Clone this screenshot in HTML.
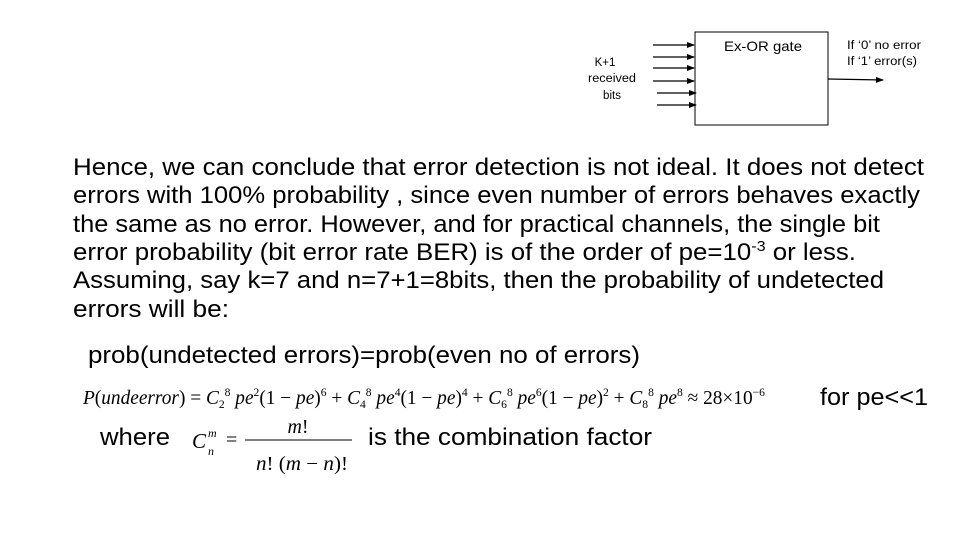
<!DOCTYPE html>
<html><head><meta charset="utf-8"><style>html,body{margin:0;padding:0;background:#fff}svg{display:block}</style></head>
<body>
<svg width="960" height="540" viewBox="0 0 960 540" xmlns="http://www.w3.org/2000/svg">
<defs><marker id="a" markerWidth="8" markerHeight="6" refX="7" refY="3" orient="auto" markerUnits="userSpaceOnUse"><path d="M0,0 L8,3 L0,6 z" fill="#000"/></marker></defs>
<rect x="695" y="32" width="133" height="93" fill="#fff" stroke="#000" stroke-width="1"/>
<g stroke="#000" stroke-width="1.3" marker-end="url(#a)">
<line x1="653" y1="45" x2="694" y2="45"/>
<line x1="653" y1="57" x2="694" y2="57"/>
<line x1="653" y1="68" x2="694" y2="68"/>
<line x1="653" y1="81" x2="694" y2="81"/>
<line x1="657" y1="93" x2="696" y2="93"/>
<line x1="657" y1="105" x2="696" y2="105"/>
<line x1="828" y1="79" x2="883" y2="80"/>
</g>
<g font-family="Liberation Sans, sans-serif" fill="#000">
<text x="724" y="51" font-size="14" textLength="78" lengthAdjust="spacingAndGlyphs">Ex-OR gate</text>
<text x="847" y="49" font-size="11.5" textLength="74" lengthAdjust="spacingAndGlyphs">If ‘0’ no error</text>
<text x="847" y="65" font-size="11.5" textLength="70" lengthAdjust="spacingAndGlyphs">If ‘1’ error(s)</text>
<text x="605" y="66" font-size="11.5" text-anchor="middle">K+1</text>
<text x="588" y="82" font-size="11.5" textLength="48" lengthAdjust="spacingAndGlyphs">received</text>
<text x="612" y="99" font-size="11.5" text-anchor="middle">bits</text>
<g font-size="24">
<text x="73" y="175" textLength="851" lengthAdjust="spacingAndGlyphs">Hence, we can conclude that error detection is not ideal. It does not detect</text>
<text x="73" y="203" textLength="847" lengthAdjust="spacingAndGlyphs">errors with 100% probability , since even number of errors behaves exactly</text>
<text x="73" y="232" textLength="807" lengthAdjust="spacingAndGlyphs">the same as no error. However, and for practical channels, the single bit</text>
<text x="73" y="260" textLength="783" lengthAdjust="spacingAndGlyphs">error probability (bit error rate BER) is of the order of pe=10<tspan font-size="15" dy="-9">-3</tspan><tspan dy="9"> or less.</tspan></text>
<text x="73" y="288" textLength="811" lengthAdjust="spacingAndGlyphs">Assuming, say k=7 and n=7+1=8bits, then the probability of undetected</text>
<text x="73" y="317" textLength="156" lengthAdjust="spacingAndGlyphs">errors will be:</text>
<text x="88" y="363" textLength="552" lengthAdjust="spacingAndGlyphs">prob(undetected errors)=prob(even no of errors)</text>
<text x="820" y="405" textLength="108" lengthAdjust="spacingAndGlyphs">for pe&lt;&lt;1</text>
<text x="100" y="445" textLength="70" lengthAdjust="spacingAndGlyphs">where</text>
<text x="368" y="445" textLength="284" lengthAdjust="spacingAndGlyphs">is the combination factor</text>
</g>
</g>
<g font-family="Liberation Serif, serif" fill="#000">
<text x="83" y="404" font-size="20" textLength="682" lengthAdjust="spacingAndGlyphs"><tspan font-style="italic">P</tspan>(<tspan font-style="italic">undeerror</tspan>) = <tspan font-style="italic">C</tspan><tspan font-size="12" dy="4">2</tspan><tspan font-size="12" dy="-12">8</tspan><tspan dy="8" font-style="italic"> pe</tspan><tspan font-size="12" dy="-8">2</tspan><tspan dy="8">(1 − </tspan><tspan font-style="italic">pe</tspan>)<tspan font-size="12" dy="-8">6</tspan><tspan dy="8"> + </tspan><tspan font-style="italic">C</tspan><tspan font-size="12" dy="4">4</tspan><tspan font-size="12" dy="-12">8</tspan><tspan dy="8" font-style="italic"> pe</tspan><tspan font-size="12" dy="-8">4</tspan><tspan dy="8">(1 − </tspan><tspan font-style="italic">pe</tspan>)<tspan font-size="12" dy="-8">4</tspan><tspan dy="8"> + </tspan><tspan font-style="italic">C</tspan><tspan font-size="12" dy="4">6</tspan><tspan font-size="12" dy="-12">8</tspan><tspan dy="8" font-style="italic"> pe</tspan><tspan font-size="12" dy="-8">6</tspan><tspan dy="8">(1 − </tspan><tspan font-style="italic">pe</tspan>)<tspan font-size="12" dy="-8">2</tspan><tspan dy="8"> + </tspan><tspan font-style="italic">C</tspan><tspan font-size="12" dy="4">8</tspan><tspan font-size="12" dy="-12">8</tspan><tspan dy="8" font-style="italic"> pe</tspan><tspan font-size="12" dy="-8">8</tspan><tspan dy="8"> ≈ 28×10</tspan><tspan font-size="12" dy="-8">−6</tspan></text>
<text x="192" y="448" font-size="21" font-style="italic">C</text>
<text x="208" y="455" font-size="12" font-style="italic">n</text>
<text x="208" y="437" font-size="12" font-style="italic">m</text>
<text x="226" y="446" font-size="20">=</text>
<text x="298" y="433" font-size="20" text-anchor="middle"><tspan font-style="italic">m</tspan>!</text>
<line x1="245" y1="440" x2="352" y2="440" stroke="#000" stroke-width="1"/>
<text x="256" y="470" font-size="20" textLength="92" lengthAdjust="spacingAndGlyphs"><tspan font-style="italic">n</tspan>! (<tspan font-style="italic">m</tspan> − <tspan font-style="italic">n</tspan>)!</text>
</g>
</svg>
</body></html>
